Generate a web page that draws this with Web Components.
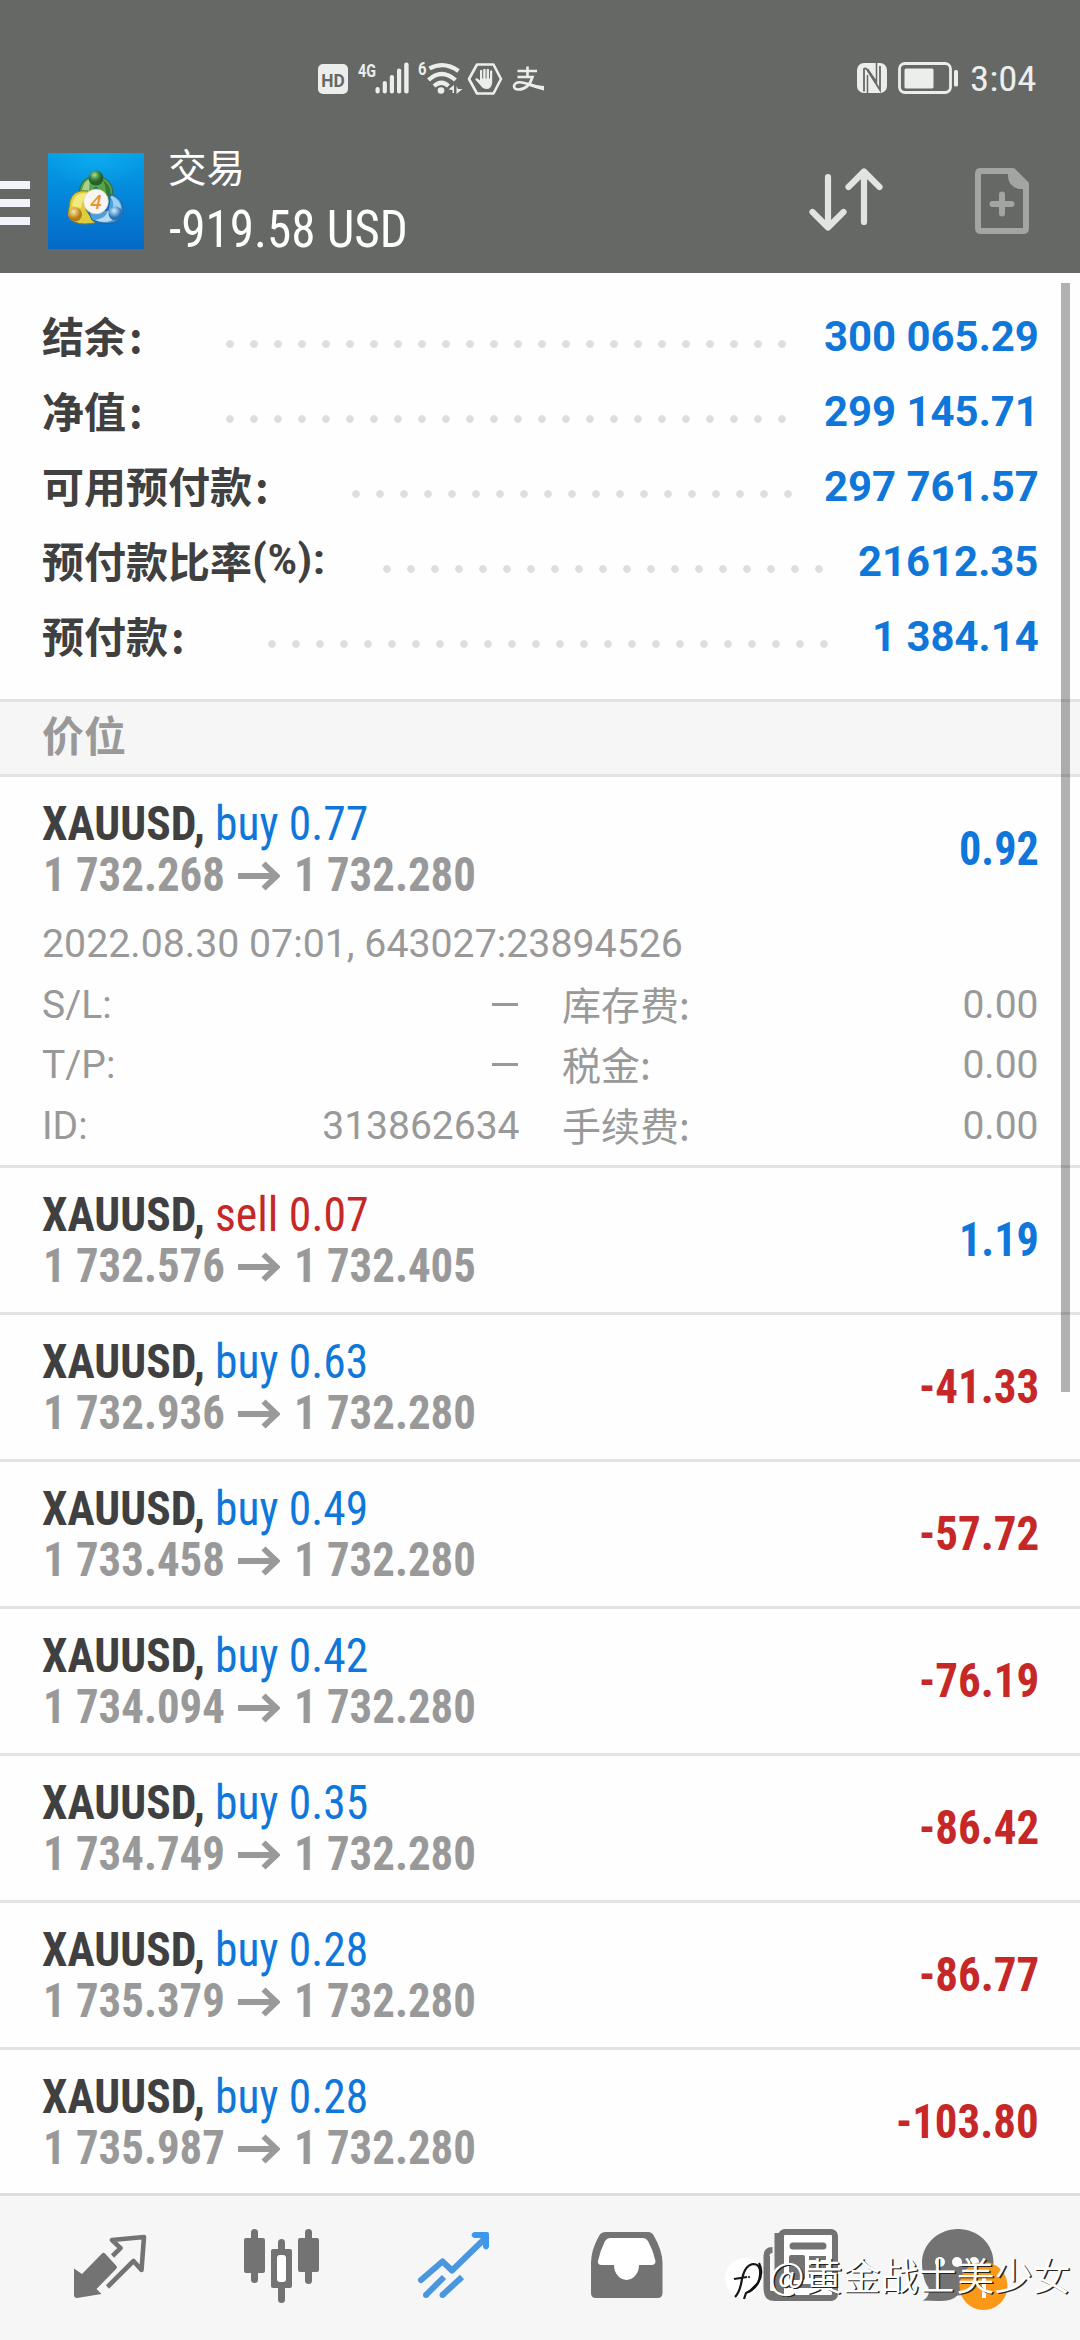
<!DOCTYPE html>
<html lang="zh-CN">
<head>
<meta charset="utf-8">
<title>交易</title>
<style>
html,body{margin:0;padding:0;background:#fefefe}
body{width:1080px;height:2340px;overflow:hidden;font-family:Roboto,"Noto Sans CJK SC",sans-serif}
</style>
</head>
<body>
<trade-app></trade-app>
<script>
const define=(name,render,after)=>customElements.define(name,class extends HTMLElement{
  connectedCallback(){
    if(this.shadowRoot)return;
    const root=this.attachShadow({mode:'open'});
    root.innerHTML=render(this);
    if(after)after(this,root);
  }
});
const a=(el,n)=>el.getAttribute(n)||'';

/* Condensed text: squeezed horizontally to the width given in "w" */
define('fit-text',el=>`<style>
:host{display:block;width:${a(el,'w')}px;white-space:nowrap;font-stretch:75%}
span{display:inline-block;transform-origin:0 50%;white-space:pre}
</style><span>${a(el,'text')}</span>`,(el,root)=>{
  const s=root.querySelector('span');
  s.style.transform=`scaleX(${+a(el,'w')/s.offsetWidth})`;
});

define('status-bar',()=>`<style>
:host{display:flex;height:120px;padding:40px 0 0 300px;box-sizing:border-box;color:#eceeeb}
svg{display:block;flex:none}
.time{width:65px;height:80px;line-height:80px;font-size:35px;font-weight:400;margin-left:10px}
</style>
<svg width="260" height="80" viewBox="300 40 260 80" fill="#eceeeb">
<rect x="318" y="64" width="30" height="30" rx="5"/>
<text x="321.3" y="86.5" font-family="Roboto" font-size="19" font-weight="700" fill="#666865" textLength="23.5" lengthAdjust="spacingAndGlyphs">HD</text>
<text x="358" y="76.5" font-family="Roboto" font-size="18" font-weight="700" textLength="18" lengthAdjust="spacingAndGlyphs">4G</text>
<rect x="375.5" y="87" width="4.2" height="6.5" rx="2"/><rect x="382.7" y="81" width="4.2" height="12.5" rx="2"/><rect x="389.8" y="75" width="4.2" height="18.5" rx="2"/><rect x="397" y="68.5" width="4.2" height="25" rx="2"/><rect x="404.2" y="62.5" width="4.4" height="31" rx="2"/>
<text x="418" y="75" font-family="Roboto" font-size="18" font-weight="700" textLength="8.5" lengthAdjust="spacingAndGlyphs">6</text>
<g fill="none" stroke="#eceeeb" stroke-width="4.2"><path d="M429.5 68.5q14.500-8 29 2.500"/><path d="M428.500 80q13-12 27 0"/><path d="M434 86q7.500-6.500 14.500 0"/></g>
<circle cx="441" cy="90.500" r="3.300"/>
<path d="M454 85v8h-1.500v-3l-4-.5zM456.500 86v8l6-5h-4.500z"/>
<path d="M477 64.500h16.500l7.500 14.500-7.500 14.500h-16.500l-8-14.500z" fill="none" stroke="#eceeeb" stroke-width="2.600" stroke-linejoin="round"/>
<path d="M480 70.500q1.200-1.500 2.200 0v8h1v-9q1.400-1.500 2.400 0v9h1v-9q1.300-1.500 2.400 0v9h1v-7.500q1.100-1.300 2.200 0v12q-1 6-5.500 6-4 0-6.500-4l-5-5.500q1-2 3-.5l1.800 1.500z"/>
<g fill="none" stroke="#eceeeb" stroke-width="2.600"><path d="M517.500 71h19.500M527.500 66.500v11M517.500 77h15q-4 12.500-14 12.500-4.500 0-4.500-3.500 1-4.500 8-3.500 8 1.500 21 6"/></g><path d="M530 84.500l14 1.500v4.500q-8-2-15-4.500z"/>
</svg>
<svg width="240" height="80" viewBox="720 40 240 80" style="margin-left:160px" fill="#eceeeb">
<rect x="857" y="63" width="30" height="30" rx="7"/>
<path d="M864 91.500V69q1.500-1.500 3 .5l13 20.500V66" fill="none" stroke="#666865" stroke-width="1.800"/><path d="M867.500 93V75M876.500 63v19l-9-13" fill="none" stroke="#666865" stroke-width="1.500"/>
<rect x="899.500" y="63.500" width="51" height="29" rx="5.500" fill="none" stroke="#eceeeb" stroke-width="2.800"/>
<rect x="904.500" y="68.500" width="29" height="20" rx="1.500"/><rect x="954" y="70" width="4" height="16.500" rx="1.500"/>
</svg>
<div class="time"><fit-text w="66.500" text="3:04"></fit-text></div>`);

define('mt-logo',()=>`<style>:host{display:block;width:96px;height:96px}svg{display:block}</style>
<svg width="96" height="96" viewBox="0 0 96 96"><defs>
<linearGradient id="b" x1="0" y1="0" x2="0" y2="1"><stop offset="0" stop-color="#05a0e6"/><stop offset=".5" stop-color="#0384d8"/><stop offset="1" stop-color="#0568c6"/></linearGradient>
<radialGradient id="h" cy=".1"><stop offset="0" stop-color="#12b8f8"/><stop offset="1" stop-color="#12b8f8" stop-opacity="0"/></radialGradient>
<radialGradient id="g" cx=".4" cy=".3"><stop offset="0" stop-color="#b3d8a0"/><stop offset=".6" stop-color="#3d8a3c"/><stop offset="1" stop-color="#225f2d"/></radialGradient>
<radialGradient id="y" cx=".4" cy=".3"><stop offset="0" stop-color="#ffeaa0"/><stop offset="1" stop-color="#b57d18"/></radialGradient>
<radialGradient id="u" cx=".4" cy=".3"><stop offset="0" stop-color="#d3efff"/><stop offset="1" stop-color="#2474bb"/></radialGradient></defs>
<rect width="96" height="96" fill="url(#b)"/><rect width="96" height="60" fill="url(#h)" opacity=".5"/>
<path d="M31 42q0-18 17-19 17 1 17 19l-6 4-11-12-11 9z" fill="#5ba34a" stroke="#2f6a30"/>
<path d="M34 37q2-9 8-11l-1 12z" fill="#a7d18d"/><path d="M55 27q8 5 8 16l-5 3q1-10-3-19z" fill="#2f7a36"/>
<path d="M40 38q-15-2-18 10l-2 14q4 9 17 9l10-1-9-13z" fill="#dfcb3c" stroke="#85802c"/>
<path d="M36 40q-11 1-12 13l9 2q1-8 6-14z" fill="#f3e97c"/>
<path d="M63 41q13 5 12 18l-4 8q-11 7-27 0l-3-7 19-3z" fill="#4d9fd8" stroke="#225d98"/>
<path d="M64 43q9 4 9 13l-8-2q1-6-3-10z" fill="#9dd0f0"/><path d="M47 67q10-1 13-9l8 7q-10 7-21 2z" fill="#b5dcf2"/>
<circle cx="48" cy="25" r="7.500" fill="url(#g)"/><circle cx="27" cy="61.500" r="7" fill="url(#y)"/><circle cx="67.500" cy="60.500" r="7" fill="url(#u)"/>
<circle cx="48" cy="48.500" r="12.300" fill="#f7f6f0" stroke="#ddd4bc" stroke-width=".7"/>
<text x="48" y="55.500" text-anchor="middle" font-family="Open Sans" font-size="20" font-weight="600" font-style="italic" fill="#e89535">4</text></svg>`);

define('app-header',()=>`<style>
:host{display:flex;height:153px;color:#fff;padding-right:51px;box-sizing:border-box}
.menu{display:flex;flex-direction:column;gap:10px;padding-top:61px;width:48px}.menu i{width:30px;height:8px;background:#f0f4fa}
mt-logo{margin-top:33px}
.t{flex:1;padding:21.500px 0 0 24px}.a{font:400 38.500px/46px "Noto Sans CJK SC";}
fit-text{font-size:51px;line-height:60px;margin-top:12px;margin-left:1px}
svg{display:block}
</style><div class="menu"><i></i><i></i><i></i></div><mt-logo></mt-logo>
<div class="t"><div class="a">交易</div><fit-text w="239" text="-919.58 USD"></fit-text></div>
<svg width="249" height="140" viewBox="780 120 249 140" fill="none" stroke-linecap="round" stroke-linejoin="round">
<path d="M828 178v50M812.500 213l15.500 15.500 15.500-15.500M864 223v-50M848.500 188l15.500-15.500 15.500 15.500" transform="translate(0 -1)" stroke="#e1e4e0" stroke-width="6.200"/>
<g stroke="#a2a5a1" stroke-width="6"><path d="M980 171h33l13 13v44q0 3-3 3h-42q-3 0-3-3v-54q0-3 2-3z"/><path d="M1002 194.500v19M992.500 204h19"/></g>
<path d="M1008 171h5l13 13v5h-7q-11-3-11-13z" fill="#a2a5a1"/></svg>`);

define('sum-row',el=>`<style>
:host{display:flex;height:75px;align-items:center}
.l{display:flex;font:600 42px/75px "Noto Sans CJK SC";color:#404040;white-space:nowrap;transform:translateY(-2px)}
.c{width:42px;box-sizing:border-box;padding-left:3px}
.d{height:24px;margin:15px auto 0 50px;width:${a(el,'dots')*24}px;flex:none;background:radial-gradient(circle,#dedede 3.400px,transparent 4.300px) 0 0/24px 24px}
.v{font-size:42px;font-weight:700;line-height:75px;color:#1077da}
.p{width:73px;font-weight:600}
</style><span class="l"><span>${a(el,'label')}</span>${a(el,'suffix')?`<fit-text class="p" w="73" style="font-family:Roboto" text="${a(el,'suffix')}"></fit-text>`:'<span class="c">:</span>'}</span><span class="d"></span><fit-text class="v" style="font-stretch:100%" w="${a(el,'vw')}" text="${a(el,'value')}"></fit-text>`);

define('account-summary',()=>`<style>:host{display:block;height:426px;padding:26px 41.500px 0 42px;box-sizing:border-box}</style>
<sum-row label="结余" dots="24" value="300 065.29" vw="214.500"></sum-row>
<sum-row label="净值" dots="24" value="299 145.71" vw="214.500"></sum-row>
<sum-row label="可用预付款" dots="19" value="297 761.57" vw="214.500"></sum-row>
<sum-row label="预付款比率" suffix="(%):" dots="19" value="21612.35" vw="180.500"></sum-row>
<sum-row label="预付款" dots="24" value="1 384.14" vw="166.500"></sum-row>`);

define('section-title',()=>`<style>:host{display:block;height:78px;box-sizing:border-box;border-top:3px solid #e3e3e3;border-bottom:3px solid #e3e3e3;background:#f6f6f6;padding-left:42px;font:600 42px/64px "Noto Sans CJK SC";color:#999}</style><slot></slot>`);

define('trade-row',el=>`<style>
:host{display:block;box-sizing:border-box;border-bottom:3px solid #e3e3e3;padding:0 41.500px 0 42px;height:147px}
:host([open]){height:391px}
.m{display:flex;justify-content:space-between;height:144px}
.t{display:flex;gap:10px;font-size:48px;line-height:56px;padding-top:19px}
.s{font-weight:700;color:#404040}.k{color:${a(el,'kind')=='buy'?'#1077da':'#c62828'}}
.p{display:flex;font-size:48px;font-weight:700;line-height:51px;color:#999;align-items:center;margin-top:-3px}
.p fit-text{margin-left:1px}.p svg{margin:3px 13px 0 13px}
.v{font-size:48px;font-weight:700;line-height:144px;color:${a(el,'value')[0]=='-'?'#c62828':'#1077da'}}
</style><div class="m"><div><div class="t"><fit-text class="s" w="163" text="XAUUSD,"></fit-text><fit-text class="k" w="153.500" text="${a(el,'kind')} ${a(el,'lot')}"></fit-text></div>
<div class="p"><fit-text w="182" text="${a(el,'from')}"></fit-text><svg width="42" height="30" viewBox="0 0 42 30" fill="none" stroke="#999" stroke-width="5.800"><path d="M0 15h38M25.500 2.500 38.500 15 25.500 27.500"/></svg><fit-text w="182" text="${a(el,'to')}"></fit-text></div></div>
<fit-text class="v" w="${a(el,'vw')}" text="${a(el,'value')}"></fit-text></div><slot></slot>`);

define('trade-details',()=>`<style>
:host{display:block;color:#999;font:400 39px/60.500px Roboto,"Noto Sans CJK SC";margin-top:-7.500px}
.g{display:grid;grid-template-columns:477.500px 1fr;column-gap:42.500px;grid-auto-rows:60.500px}
.g div{display:flex;justify-content:space-between}
.c{font:400 39px/56px "Noto Sans CJK SC"}
i{width:26px;height:3px;background:#999;margin:28px 2px 0 0}
.date{height:61px}
</style><div class="date"><fit-text w="640.500" text="2022.08.30 07:01, 643027:23894526" style="font-stretch:100%"></fit-text></div><div class="g">
<div><span>S/L:</span><i></i></div><div><span class="c">库存费:</span><span>0.00</span></div>
<div><span>T/P:</span><i></i></div><div><span class="c">税金:</span><span>0.00</span></div>
<div><span>ID:</span><span>313862634</span></div><div><span class="c">手续费:</span><span>0.00</span></div></div>`);

define('scroll-thumb',()=>`<style>:host{position:absolute;left:1060.500px;top:283px;width:9.500px;height:1109px;background:rgba(0,0,0,.3)}</style>`);

const icons=[
 `<path d="M74 2268.500l8 5.500 20-20.500q1.500-1.500 3 0l11.500 12.500q1 1.500-.5 3l-19.500 20 5 5-24.500 4q-3 0-3-3z" fill="#737373"/><path d="M112.500 2256l8-7.800-8.500-8.200 32-3-2.500 33-8-9-26 26" fill="none" stroke="#737373" stroke-width="4.600" stroke-linejoin="round"/>`,
 `<g fill="#737373"><rect x="251" y="2229" width="7" height="54" rx="3.500"/><rect x="244" y="2238" width="21" height="35" rx="2"/><rect x="305" y="2229" width="7" height="55" rx="3.500"/><rect x="298" y="2238" width="21" height="34" rx="2"/><rect x="278" y="2239" width="7" height="64" rx="3.500"/><rect x="271" y="2249" width="21" height="39" rx="2"/></g><rect x="277" y="2255" width="9" height="27" rx="3" fill="#fff"/>`,
 `<g fill="none" stroke="#4a97e0" stroke-width="6" stroke-linejoin="round"><path d="M421 2280l21.500-18.500 9.500 9 34-33" stroke-linecap="round"/><path d="M426 2295l18-18M442.500 2295l19.500-18"/></g><path d="M474 2232h13q2 0 2 2v13q-3 5-6 0v-8l-3-1h-6q-5-3 0-6z" fill="#3d97ea"/><circle cx="426" cy="2295" r="3" fill="#4a97e0"/><circle cx="442.500" cy="2295" r="3" fill="#4a97e0"/>`,
 `<path d="M606 2232h42q4 0 6 4 8.500 15 8.500 27v30q0 5-5 5h-61.500q-5 0-5-5v-30q0-13 8-27 2-4 7-4z" fill="#737373"/><path d="M610 2238h33q3 0 5 3 5 9 7.500 20 0 4-4 4h-12.500a12.500 15 0 0 1-25 0h-12.500q-4 0-3.500-4 2-10 7-20 2-3 5-3z" fill="#fff"/>`,
 `<path d="M777.500 2233v57q0 3-3 4h-4q-4-1-4-5v-33q0-6 6-6" fill="none" stroke="#737373" stroke-width="6"/><rect x="781" y="2232" width="54" height="66" rx="4" fill="#fff" stroke="#737373" stroke-width="6"/><path d="M767 2256v35q0 7 8 7h53" stroke="#737373" stroke-width="6" fill="none"/><path d="M793 2246h30" stroke="#737373" stroke-width="7" stroke-linecap="round"/><rect x="789" y="2255" width="16" height="25" rx="2" fill="#737373"/><path d="M809 2258h17M809 2267h17M809 2276h17M789 2286h37" stroke="#737373" stroke-width="4"/>`,
 `<path d="M958 2229c20 0 35.500 15 35.500 33.500s-15 33-36 33q-6 6-20 5.500l-15-.5q8-4 6-13c-4-5-6.500-15-6.500-25 0-18 16-33.500 36-33.500z" fill="#737373"/><g fill="#fff"><circle cx="940" cy="2262" r="5"/><circle cx="957" cy="2262" r="5"/><circle cx="974" cy="2262" r="5"/></g><circle cx="983.500" cy="2286" r="24" fill="#fb9817"/><path d="M984 2276v22" stroke="#fff" stroke-width="4"/>`
];
define('tab-bar',()=>`<style>:host{display:flex;position:relative;box-sizing:border-box;height:147px;border-top:3px solid #dedede;background:#f6f6f6;padding:0 24px}svg{display:block;flex:none}</style>
${icons.map((p,i)=>`<svg width="172" height="144" viewBox="${24+172*i} 2196 172 144">${p}</svg>`).join('')}`);

define('water-mark',()=>`<style>:host{position:absolute;left:724px;top:2249px;display:flex;align-items:center;color:#fff;height:50px}
svg{display:block;flex:none}span{font:350 38px/50px "Noto Sans CJK SC";text-shadow:1.500px 1px .5px #222;white-space:nowrap}</style>
<svg width="45" height="54" viewBox="724 2249 45 54"><path d="M744 2260q18 0 19 19-1 13-11 17l-9 7-4-4q-13-3-14-18 1-19 19-21z" fill="#fff"/><path d="M735 2299q5-5 7-18 3-14 11-15 8 0 7 11-1 13-14 18l-2 6M734 2281l13-2" fill="none" stroke="#161616" stroke-width="2.200"/><path d="M759 2265q5 10-1 20l-9 9" fill="none" stroke="#111" stroke-width="2.200"/><circle cx="749" cy="2279" r="1.200" fill="#444"/></svg><span>@黄金战士美少女</span>`);

const rows=[['sell','0.07','1 732.576','1 732.405','1.19',80],['buy','0.63','1 732.936','1 732.280','-41.33',120],['buy','0.49','1 733.458','1 732.280','-57.72',120],['buy','0.42','1 734.094','1 732.280','-76.19',120],['buy','0.35','1 734.749','1 732.280','-86.42',120],['buy','0.28','1 735.379','1 732.280','-86.77',120],['buy','0.28','1 735.987','1 732.280','-103.80',143]];
define('trade-app',()=>`<style>:host{display:flex;flex-direction:column;position:relative;width:1080px;height:2340px;overflow:hidden;background:#fefefe}
.top{background:#666865;height:273px;flex:none}tab-bar{flex:none}main{height:1920px;flex:none;overflow:hidden}</style>
<div class="top"><status-bar></status-bar><app-header></app-header></div>
<main><account-summary></account-summary><section-title>价位</section-title>
<trade-row open kind="buy" lot="0.77" from="1 732.268" to="1 732.280" value="0.92" vw="80"><trade-details></trade-details></trade-row>
${rows.map(r=>`<trade-row kind="${r[0]}" lot="${r[1]}" from="${r[2]}" to="${r[3]}" value="${r[4]}" vw="${r[5]}"></trade-row>`).join('')}
</main><tab-bar></tab-bar><scroll-thumb></scroll-thumb><water-mark></water-mark>`);
</script>
</body>
</html>
